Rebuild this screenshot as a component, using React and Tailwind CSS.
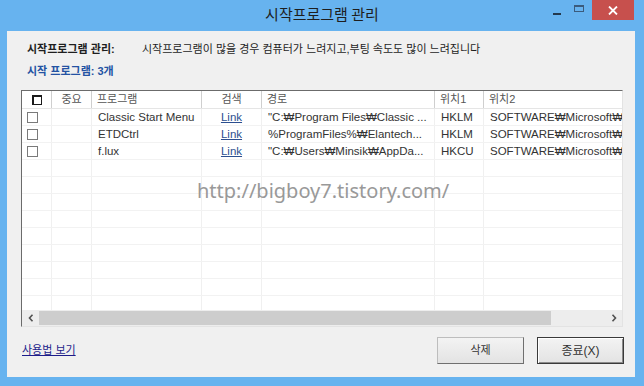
import React from "react";

const rows = [
  { name: "Classic Start Menu", path: "\"C:₩Program Files₩Classic ...", loc1: "HKLM", loc2: "SOFTWARE₩Microsoft₩" },
  { name: "ETDCtrl", path: "%ProgramFiles%₩Elantech...", loc1: "HKLM", loc2: "SOFTWARE₩Microsoft₩" },
  { name: "f.lux", path: "\"C:₩Users₩Minsik₩AppDa...", loc1: "HKCU", loc2: "SOFTWARE₩Microsoft₩" },
];

const gridCols = "grid grid-cols-[30px_40px_110px_60px_173px_49px_240px]";

function Chk({ header }) {
  if (header) {
    return (
      <div className="w-[10px] h-[10px] bg-white border-t-2 border-l-2 border-b border-r border-[#1a1a1a]" />
    );
  }
  return <div className="w-[11px] h-[11px] bg-white border border-[#7a7a7a]" />;
}

function DataRow({ r }) {
  return (
    <div className={`${gridCols} h-[17px] shrink-0 border-b border-[#f2f2f2] text-[11.5px] text-[#333] leading-[16px]`}>
      <div className="border-r border-[#f0f0f0] flex items-center pl-[5px]">
        {r && <Chk />}
      </div>
      <div className="border-r border-[#f0f0f0]" />
      <div className="border-r border-[#f0f0f0] pl-[6px] whitespace-nowrap overflow-hidden">{r && r.name}</div>
      <div className="border-r border-[#f0f0f0] flex justify-center">
        {r && <span className="underline text-[#2c4f8f]">Link</span>}
      </div>
      <div className="border-r border-[#f0f0f0] pl-[6px] whitespace-nowrap overflow-hidden">{r && r.path}</div>
      <div className="border-r border-[#f0f0f0] pl-[6px] whitespace-nowrap overflow-hidden">{r && r.loc1}</div>
      <div className="pl-[6px] whitespace-nowrap overflow-hidden">{r && r.loc2}</div>
    </div>
  );
}

export default function App() {
  return (
    <div className="w-[644px] h-[386px] bg-[#67b3ef] flex flex-col font-['Liberation_Sans','Noto_Sans_CJK_KR',sans-serif] overflow-hidden">
      {/* Title bar */}
      <div className="h-[31px] shrink-0 grid grid-cols-[1fr_auto_1fr]">
        <div />
        <div className="pt-[4px] text-[15px] leading-[20px] text-[#1e1e1e] font-['Noto_Sans_CJK_KR',sans-serif]">시작프로그램 관리</div>
        <div className="flex justify-end items-start pr-[10px]">
          <div className="w-[26px] h-[20px] flex items-center justify-center mt-[1px]">
            <div className="w-[8px] h-[2px] bg-[#23384d] mt-[6px]" />
          </div>
          <div className="w-[17px] h-[20px] flex items-center justify-center">
            <div className="w-[10px] h-[7px] border border-t-2 border-[#3b5b7c] mt-[-4px]" />
          </div>
          <div className="ml-[5px] w-[42px] h-[20px] bg-[#c7504d] flex items-center justify-center">
            <svg width="10" height="9" viewBox="0 0 10 9">
              <path d="M1 0.5 L9 8.5 M9 0.5 L1 8.5" stroke="#ffffff" strokeWidth="1.8" />
            </svg>
          </div>
        </div>
      </div>

      {/* Client area */}
      <div className="flex-1 ml-[7px] mr-[9px] mb-[9px] bg-[#f0f0f0] flex flex-col relative">
        <div className="mt-[10px] h-[16px] flex items-center pl-[20px] text-[11px] text-[#1e1e1e] leading-[16px]">
          <div className="w-[115px] font-bold">시작프로그램 관리:</div>
          <div>시작프로그램이 많을 경우 컴퓨터가 느려지고,부팅 속도도 많이 느려집니다</div>
        </div>
        <div className="mt-[6px] h-[16px] pl-[20px] text-[11px] font-bold text-[#2453a3] leading-[16px]">
          시작 프로그램: 3개
        </div>

        {/* Table */}
        <div className="mt-[11px] ml-[14px] mr-[12px] h-[237px] shrink-0 bg-white border-t border-l border-[#6b6b6b] border-b border-r border-b-[#e3e3e3] border-r-[#e3e3e3] flex flex-col overflow-hidden">
          <div className={`${gridCols} h-[18px] shrink-0 border-b border-[#e5e5e5] text-[11px] text-[#555] leading-[17px]`}>
            <div className="border-r border-[#cfcfcf] flex items-center pl-[10px]">
              <Chk header />
            </div>
            <div className="border-r border-[#cfcfcf] text-center">중요</div>
            <div className="border-r border-[#cfcfcf] pl-[5px]">프로그램</div>
            <div className="border-r border-[#cfcfcf] text-center">검색</div>
            <div className="border-r border-[#cfcfcf] pl-[5px]">경로</div>
            <div className="border-r border-[#cfcfcf] pl-[5px]">위치1</div>
            <div className="pl-[5px]">위치2</div>
          </div>
          <div className="flex-1 flex flex-col overflow-hidden">
            {rows.map((r, i) => (
              <DataRow key={i} r={r} />
            ))}
            {Array.from({ length: 10 }).map((_, i) => (
              <DataRow key={"e" + i} />
            ))}
          </div>
          {/* horizontal scrollbar */}
          <div className="h-[16px] shrink-0 flex bg-[#ededed]">
            <div className="w-[17px] flex items-center justify-center">
              <svg width="6" height="8" viewBox="0 0 6 8">
                <path d="M4.5 0.8 L1.5 4 L4.5 7.2" stroke="#505050" strokeWidth="1.6" fill="none" />
              </svg>
            </div>
            <div className="w-[512px] my-[1px] bg-[#cdcdcd]" />
            <div className="flex-1" />
            <div className="w-[17px] flex items-center justify-center">
              <svg width="6" height="8" viewBox="0 0 6 8">
                <path d="M1.5 0.8 L4.5 4 L1.5 7.2" stroke="#505050" strokeWidth="1.6" fill="none" />
              </svg>
            </div>
          </div>
        </div>

        {/* Bottom bar */}
        <div className="mt-[10px] h-[27px] flex items-center justify-between pl-[15px] pr-[11px]">
          <span className="text-[11px] text-[#1c1c8a] underline leading-[14px] mt-[-2px]">사용법 보기</span>
          <div className="flex gap-[13px]">
            <div className="w-[87px] h-[27px] flex items-center justify-center text-[11px] text-[#333] bg-gradient-to-b from-[#f3f3f3] to-[#e3e3e3] border border-[#bdbdbd] border-r-[#6f6f6f] border-b-[#6f6f6f]">
              삭제
            </div>
            <div className="w-[87px] h-[27px] flex items-center justify-center text-[12px] text-[#333] bg-gradient-to-b from-[#f3f3f3] to-[#e3e3e3] border border-[#3a3a3a] shadow-[inset_1px_1px_0_#ffffff,inset_-1px_-1px_0_#8a8a8a]">
              종료(X)
            </div>
          </div>
        </div>

        {/* watermark */}
        <div className="absolute left-[190px] top-[147px] text-[20px] leading-[26px] text-[#999999] font-['Noto_Sans',sans-serif] whitespace-nowrap">
          http://bigboy7.tistory.com/
        </div>
      </div>
    </div>
  );
}
